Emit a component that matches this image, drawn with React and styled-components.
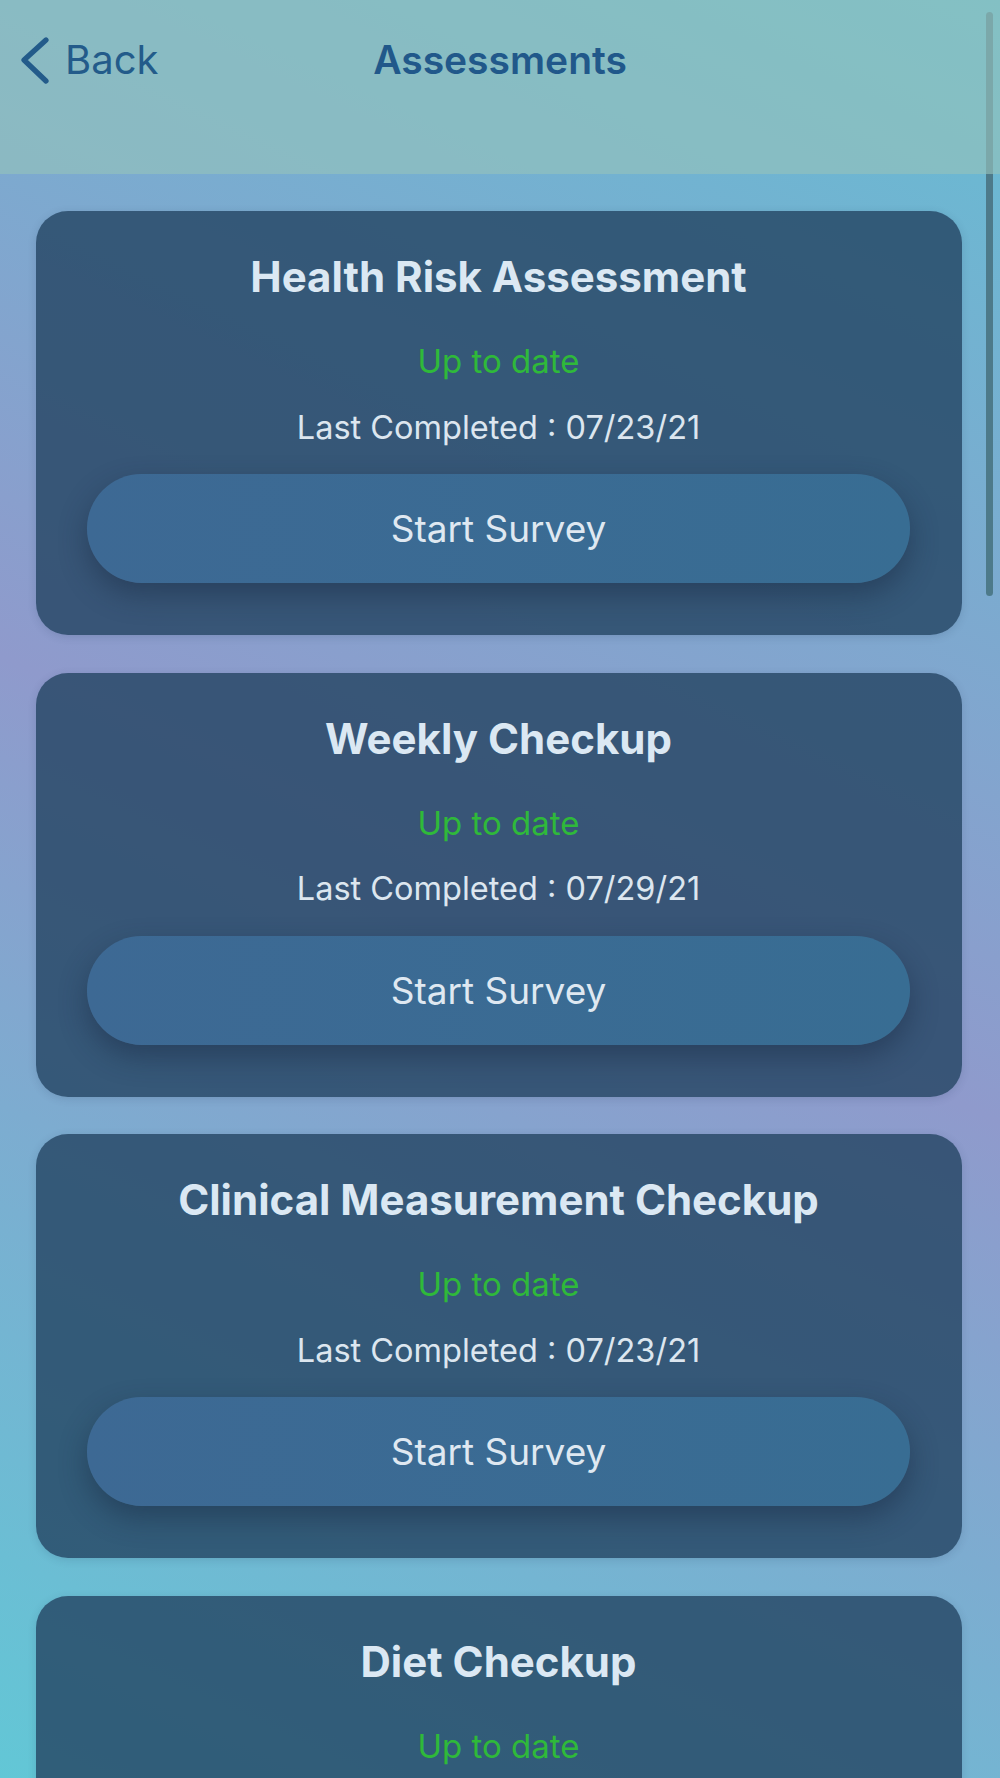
import React from "react";
import styled, { createGlobalStyle } from "styled-components";

const assessments = [
  { title: "Health Risk Assessment", status: "Up to date", last: "07/23/21" },
  { title: "Weekly Checkup", status: "Up to date", last: "07/29/21" },
  { title: "Clinical Measurement Checkup", status: "Up to date", last: "07/23/21" },
  { title: "Diet Checkup", status: "Up to date", last: "07/23/21" }
];

const GlobalStyle = createGlobalStyle`
  html, body {
    margin: 0;
    padding: 0;
    height: 100%;
    overflow: hidden;
  }
  body {
    font-family: Inter, "Noto Sans", "Liberation Sans", sans-serif;
  }
`;

const App = () => (
  <Page>
    <GlobalStyle />
    <ScrollThumb />
    <Header>
      <NavBar>
        <BackButton>
          <svg width="30" height="50" viewBox="0 0 30 50" fill="none">
            <path
              d="M27 5 L5 25 L27 46"
              stroke="#235b8a"
              strokeWidth="5.2"
              strokeLinecap="round"
              strokeLinejoin="round"
            />
          </svg>
          <span>Back</span>
        </BackButton>
        <NavTitle>Assessments</NavTitle>
        <span />
      </NavBar>
    </Header>
    <CardList>
      {assessments.map(item => (
        <Card key={item.title}>
          <CardTitle>{item.title}</CardTitle>
          <Status>{item.status}</Status>
          <LastCompleted>Last Completed : {item.last}</LastCompleted>
          <SurveyButton>Start Survey</SurveyButton>
        </Card>
      ))}
    </CardList>
  </Page>
);

const Page = styled.div`
  position: relative;
  height: 100vh;
  overflow: hidden;
  background: linear-gradient(
    205deg,
    #66bdd3 0%,
    #8f9acc 50%,
    #62c7d6 100%
  );
`;

const ScrollThumb = styled.div`
  position: absolute;
  top: 12px;
  right: 7px;
  width: 7px;
  height: 584px;
  border-radius: 4px;
  background: #4d7a8a;
`;

const Header = styled.header`
  position: relative;
  z-index: 1;
  height: 174px;
  box-sizing: border-box;
  padding: 35px 19px 0 19px;
  background: rgba(148, 193, 188, 0.65);
`;

const NavBar = styled.div`
  display: grid;
  grid-template-columns: 1fr auto 1fr;
  align-items: center;
  height: 50px;
`;

const BackButton = styled.div`
  display: flex;
  align-items: center;
  gap: 16px;
  color: #235b8a;
  font-size: 40px;
  line-height: 50px;
  svg {
    display: block;
  }
`;

const NavTitle = styled.h1`
  margin: 0;
  color: #21588a;
  font-size: 39px;
  font-weight: 600;
  line-height: 50px;
`;

const CardList = styled.div`
  display: flex;
  flex-direction: column;
  gap: 37.7px;
  padding: 37px 38px 0 36px;
`;

const Card = styled.section`
  flex-shrink: 0;
  display: flex;
  flex-direction: column;
  align-items: center;
  height: 424px;
  box-sizing: border-box;
  padding: 42px 52px 52px 51px;
  border-radius: 32px;
  background: rgba(35, 68, 98, 0.8);
  box-shadow: 0 2px 8px rgba(30, 50, 80, 0.15);
`;

const CardTitle = styled.h2`
  margin: 0;
  color: #dbe8f3;
  font-size: 42px;
  font-weight: 650;
  line-height: 48px;
  text-align: center;
  white-space: nowrap;
`;

const Status = styled.div`
  margin-top: 40px;
  color: #2fb93a;
  font-size: 33px;
  line-height: 40px;
`;

const LastCompleted = styled.div`
  margin-top: 26.5px;
  color: #dce6ef;
  font-size: 32.5px;
  line-height: 40px;
`;

const SurveyButton = styled.button`
  margin-top: 26.5px;
  width: 100%;
  height: 109px;
  flex-shrink: 0;
  border: none;
  border-radius: 55px;
  background: linear-gradient(90deg, #3d6994 0%, #386d93 100%);
  box-shadow: 0 12px 28px rgba(25, 40, 65, 0.45);
  color: #dfe8f1;
  font-family: inherit;
  font-size: 37px;
  cursor: pointer;
`;

export default App;
